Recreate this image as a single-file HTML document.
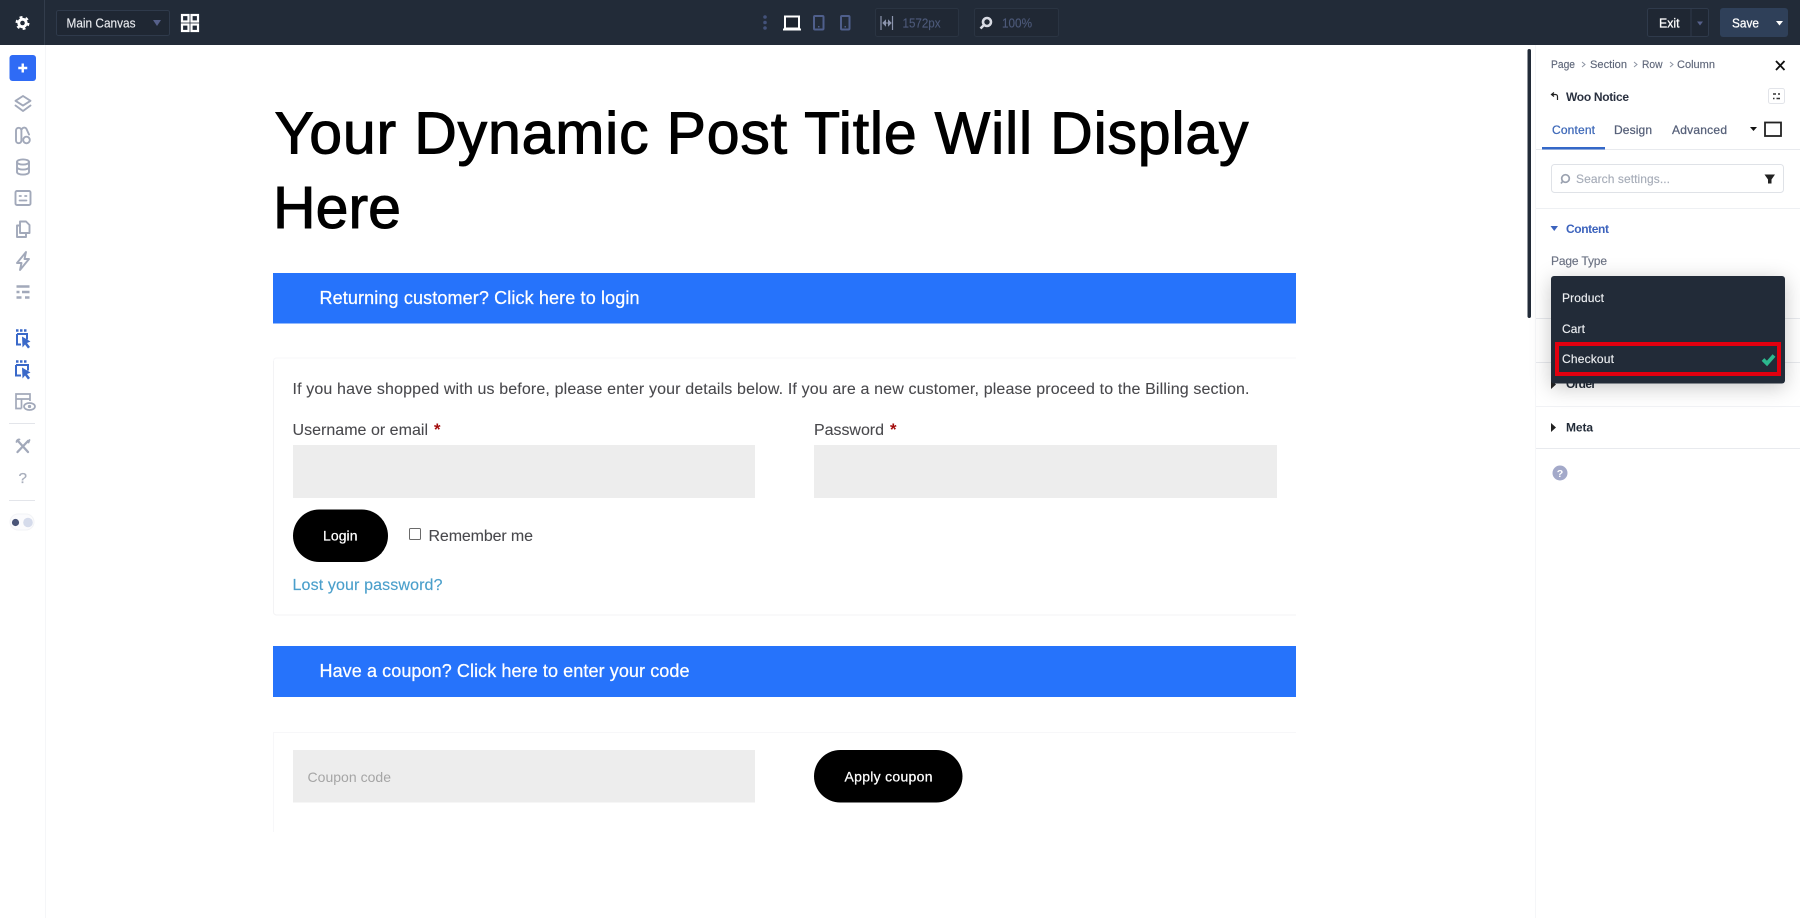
<!DOCTYPE html>
<html lang="en">
<head>
<meta charset="utf-8">
<title>Woo Notice – Main Canvas</title>
<style>
html,body{margin:0;padding:0;background:#fff;width:1800px;height:918px;overflow:hidden}
svg{display:block;position:absolute;left:0;top:0}
text{font-family:"Liberation Sans",sans-serif;white-space:pre}
.m{stroke-width:.25px}
.b{stroke-width:.14px}
.t{stroke-width:.08px}
</style>
</head>
<body>
<svg xmlns="http://www.w3.org/2000/svg" width="1800" height="918" viewBox="0 0 1800 918">
<rect width="1800" height="918" fill="#fff"/>

<!-- top bar -->
<rect width="1800" height="45" fill="#222b38"/>
<line x1="44.500" y1="0" x2="44.500" y2="45" fill="none" stroke="#333d4c"/>
<g transform="translate(22.500,23)">
  <circle r="5.200" fill="#fff"/>
  <circle r="6" fill="none" stroke="#fff" stroke-width="2" stroke-dasharray="2.900 3.380"/>
  <circle r="2.300" fill="#222b38"/>
</g>
<rect x="56.500" y="10.500" width="113" height="25" rx="2" fill="#1f2733" stroke="#2f3a4b"/>
<text x="66.500" y="27.500" font-size="13" fill="#e9ebef" stroke="#e9ebef" class="b" textLength="69" lengthAdjust="spacingAndGlyphs">Main Canvas</text>
<path d="M153 20h8l-4 6z" fill="#56608a"/>
<g fill="none" stroke="#fff" stroke-width="2.200">
  <rect x="182" y="15" width="6.500" height="6.500"/><rect x="191.500" y="15" width="6.500" height="6.500"/>
  <rect x="182" y="24.500" width="6.500" height="6.500"/><rect x="191.500" y="24.500" width="6.500" height="6.500"/>
</g>
<g fill="#43527a"><circle cx="765" cy="17" r="1.800"/><circle cx="765" cy="22.500" r="1.800"/><circle cx="765" cy="28" r="1.800"/></g>
<rect x="785" y="16.500" width="14" height="12" fill="#1c232e" stroke="#fff" stroke-width="2"/>
<rect x="783" y="28.500" width="18" height="2" fill="#fff"/>
<rect x="814" y="16" width="9.500" height="13.500" rx="1" fill="none" stroke="#4f5f8c" stroke-width="2"/>
<rect x="841" y="16" width="8.500" height="13.500" rx="1" fill="none" stroke="#4f5f8c" stroke-width="2"/>
<rect x="818" y="26" width="1.500" height="1.500" fill="#4f5f8c"/><rect x="844.500" y="26" width="1.500" height="1.500" fill="#4f5f8c"/>
<rect x="875.500" y="8.500" width="83" height="28" rx="2" fill="#202834" stroke="#2a3442"/>
<path d="M881 16v14M892.500 16v14" stroke="#8b94ad" stroke-width="1.200" fill="none"/>
<path d="M883 23h8M883 23l2.500-2.500v5zM891 23l-2.500-2.500v5z" stroke="#8b94ad" fill="#8b94ad" stroke-width="1"/>
<text x="902.500" y="27.500" font-size="13" fill="#4d5a7a" stroke="#4d5a7a" class="b" textLength="38" lengthAdjust="spacingAndGlyphs">1572px</text>
<rect x="974.500" y="8.500" width="84" height="28" rx="2" fill="#202834" stroke="#2a3442"/>
<circle cx="987" cy="22" r="4" fill="none" stroke="#d8dbe3" stroke-width="2.600"/>
<path d="M983.500 25.500l-3 3" stroke="#d8dbe3" stroke-width="2.600"/>
<text x="1002" y="27.500" font-size="13" fill="#4d5a7a" stroke="#4d5a7a" class="b" textLength="30" lengthAdjust="spacingAndGlyphs">100%</text>

<rect x="1647.500" y="8.500" width="61" height="28" rx="2" fill="#1f2733" stroke="#2f3a4b"/>
<line x1="1691" y1="9" x2="1691" y2="36" stroke="#2f3a4b"/>
<text x="1659" y="27.500" font-size="13" fill="#fff" stroke="#fff" class="m" textLength="20.500" lengthAdjust="spacingAndGlyphs">Exit</text>
<path d="M1697 21.500h6l-3 4z" fill="#56608a"/>
<rect x="1720" y="8" width="68" height="29" rx="3" fill="#2f4059"/>
<text x="1732" y="27.500" font-size="13" fill="#fff" stroke="#fff" class="m" textLength="27" lengthAdjust="spacingAndGlyphs">Save</text>
<path d="M1776 21h7l-3.500 4.500z" fill="#fff"/>

<!-- left sidebar -->
<line x1="45.500" y1="45" x2="45.500" y2="918" stroke="#f5f6f8"/>
<rect x="9.500" y="55" width="26.500" height="26" rx="3" fill="#2f6bf5"/>
<path d="M22.750 63.500v9M18.250 68h9" stroke="#fff" stroke-width="2.400"/>
<g fill="none" stroke="#a2a9ba" stroke-width="1.900" stroke-linejoin="round" stroke-linecap="round">
  <g transform="translate(23,104)"><path d="M0-8l7.500 4.800L0 1.600l-7.500-4.800z"/><path d="M-7.500 1.500L0 7l7.500-5.500"/></g>
  <g transform="translate(23,135.500)"><path d="M-7-5a2.700 2.700 0 0 1 5.400 0V5a2.700 2.700 0 0 1-5.400 0z"/><path d="M-1-6.500a2.500 2.500 0 0 1 4.500 0L6-1"/><circle cx="3.500" cy="4.500" r="3.300"/></g>
  <g transform="translate(23,167)"><ellipse cy="-5" rx="6" ry="2.600"/><path d="M-6-5V5c0 1.500 2.700 2.600 6 2.600S6 6.500 6 5V-5M-6 0c0 1.500 2.700 2.600 6 2.600S6 1.500 6 0"/></g>
  <g transform="translate(23,198)"><rect x="-7.500" y="-7" width="15" height="14" rx="1.500"/><path d="M-3.500-2h1.500M2-2h1.500M-3.500 2.500h7" stroke-width="1.700"/></g>
  <g transform="translate(23,229)"><path d="M-3-7.500H3l3.500 3.500V4H-3z"/><path d="M-3-3.500h-3V8H3V4"/></g>
  <g transform="translate(23,261)"><path d="M3-9L-6 2h4.500L-3 9 6-2H1.500z"/></g>
  <g transform="translate(23,292)" stroke-linecap="butt" stroke-width="2.500"><path d="M-6.500-5.500h13M-6.500 0h3M-1 0H6.500M-6.500 5.500h5M2 5.500h4.500"/></g>
</g>
<g fill="none" stroke="#3a69c9" stroke-width="2">
  <g transform="translate(22,338)">
    <path d="M-5-4H5V1.500M-5-4V6.500H-1"/><path d="M-6-7.500h2.500M-2-7.500h2.500M2-7.500h2.500" stroke-width="2.400"/>
    <path d="M0-1.500L8.500 3.500 5 5l3 4-2 1.500-3-4-2.500 3z" fill="#3a69c9" stroke="none"/>
  </g>
  <g transform="translate(22,369)">
    <path d="M-6-4H6V1.500M-6-4V6.500H-1"/><path d="M-6-7.500h2.500M-2-7.500h2.500M2-7.500h2.500" stroke-width="2.400"/>
    <path d="M0-1.500L8.500 3.500 5 5l3 4-2 1.500-3-4-2.500 3z" fill="#3a69c9" stroke="none"/>
  </g>
</g>
<g fill="none" stroke="#a2a9ba" stroke-width="1.700">
  <g transform="translate(23,401)"><path d="M-1.500 7.500H-7V-7H7V0M-7-2H7M-1.500-2V7.500"/><ellipse cx="6.500" cy="5.500" rx="5.500" ry="3.500"/><circle cx="6.500" cy="5.500" r=".8"/></g>
</g>
<line x1="9" y1="423.500" x2="35" y2="423.500" stroke="#e3e5ea"/>
<g fill="none" stroke="#a2a9ba" stroke-width="2.300" stroke-linecap="round">
  <path d="M18 441l10 11M28 441L17.500 452"/>
  <path d="M16.500 442a2.500 2.500 0 0 1 3-2.500M29.500 440l-1 2.500" stroke-width="1.800"/>
</g>
<text x="18.500" y="483" font-size="15" fill="#a8aebc" textLength="8.500" lengthAdjust="spacingAndGlyphs" stroke="#a8aebc" class="m">?</text>
<line x1="9" y1="500.500" x2="35" y2="500.500" stroke="#e3e5ea"/>
<rect x="10" y="514" width="24" height="16" rx="8" fill="#fbfbfd" stroke="#f2f3f6"/>
<circle cx="15.500" cy="522.500" r="3.600" fill="#4a5578"/><circle cx="28" cy="522.500" r="4.800" fill="#d5dbeb"/>

<!-- title -->
<g fill="#000" stroke="#000" stroke-width="1">
<text x="274.500" y="153.500" font-size="59" textLength="974" lengthAdjust="spacing">Your Dynamic Post Title Will Display</text>
<text x="273" y="228" font-size="59" textLength="128" lengthAdjust="spacing">Here</text>
</g>

<!-- banner 1 -->
<rect x="273" y="273" width="1023" height="50.500" fill="#2673fb"/>
<text x="319.500" y="304" font-size="18" fill="#fff" stroke="#fff" class="m" textLength="320" lengthAdjust="spacing">Returning customer? Click here to login</text>

<!-- login card -->
<path d="M273.500 361V612a3 3 0 0 0 3 3H1296" fill="none" stroke="#f3f3f5"/>
<path d="M273.500 361a3 3 0 0 1 3-3H1296" fill="none" stroke="#f7f7f9"/>
<g fill="#48484c" stroke="#48484c" class="t">
<text x="292.500" y="394" font-size="16" textLength="957" lengthAdjust="spacing">If you have shopped with us before, please enter your details below. If you are a new customer, please proceed to the Billing section.</text>
<text x="292.500" y="435" font-size="16" textLength="135.500" lengthAdjust="spacing">Username or email</text>
<text x="814" y="435" font-size="16" textLength="70" lengthAdjust="spacing">Password</text>
<text x="428.500" y="541" font-size="16" textLength="104.500" lengthAdjust="spacing">Remember me</text>
</g>
<text x="434" y="435" font-size="16.500" fill="#a30b0b" font-weight="700" textLength="6.500" lengthAdjust="spacingAndGlyphs">*</text>
<text x="890" y="435" font-size="16.500" fill="#a30b0b" font-weight="700" textLength="6.500" lengthAdjust="spacingAndGlyphs">*</text>
<rect x="293" y="445" width="462" height="53" fill="#ededed"/>
<rect x="814" y="445" width="463" height="53" fill="#ededed"/>
<rect x="293" y="509.500" width="95" height="52.500" rx="26.250" fill="#000"/>
<text x="323" y="540.500" font-size="14" fill="#fff" stroke="#fff" class="m" textLength="34.500" lengthAdjust="spacing">Login</text>
<rect x="409.500" y="528.500" width="11" height="11" rx="1" fill="#fff" stroke="#6a6a6a"/>
<text x="292.500" y="590" font-size="16" fill="#4a9fcb" stroke="#4a9fcb" class="b" textLength="150" lengthAdjust="spacing">Lost your password?</text>

<!-- banner 2 -->
<rect x="273" y="646" width="1023" height="51" fill="#2673fb"/>
<text x="319.500" y="677" font-size="18" fill="#fff" stroke="#fff" class="m" textLength="370" lengthAdjust="spacing">Have a coupon? Click here to enter your code</text>

<!-- coupon card -->
<path d="M273.500 832V732.500H1296" fill="none" stroke="#f7f7f9"/>
<rect x="293" y="750" width="462" height="52.500" fill="#ededed"/>
<text x="307.500" y="782" font-size="14" fill="#a5a5a5" textLength="83.500" lengthAdjust="spacing">Coupon code</text>
<rect x="814" y="750" width="148.500" height="52.500" rx="26.250" fill="#000"/>
<text x="844.500" y="781.500" font-size="14" fill="#fff" stroke="#fff" class="m" textLength="88" lengthAdjust="spacing">Apply coupon</text>

<!-- right panel -->
<line x1="1535.500" y1="45" x2="1535.500" y2="918" stroke="#f5f6f8"/>
<rect x="1527.500" y="49" width="3.500" height="269" rx="1.700" fill="#222b38"/>
<g font-size="11" fill="#5e6679" stroke="#5e6679" class="b">
  <text x="1551" y="68" textLength="24" lengthAdjust="spacingAndGlyphs">Page</text>
  <text x="1590" y="68" textLength="37" lengthAdjust="spacingAndGlyphs">Section</text>
  <text x="1642" y="68" textLength="20.500" lengthAdjust="spacingAndGlyphs">Row</text>
  <text x="1677" y="68" textLength="38" lengthAdjust="spacingAndGlyphs">Column</text>
</g>
<path d="M1582 62l3 2.500-3 2.500M1634 62l3 2.500-3 2.500M1670 62l3 2.500-3 2.500" fill="none" stroke="#8d94a3"/>
<path d="M1776 61l8.500 9M1784.500 61l-8.500 9" stroke="#111" stroke-width="1.800"/>
<path d="M1557.500 100v-3.500a2 2 0 0 0-2-2H1552M1554 92.500l-2.500 2 2.500 2" fill="none" stroke="#222" stroke-width="1.200"/>
<text x="1566" y="101" font-size="12" font-weight="700" fill="#2a3140" textLength="63" lengthAdjust="spacing">Woo Notice</text>
<rect x="1768.500" y="88.500" width="16" height="15" rx="2" fill="#fff" stroke="#e2e4e9"/>
<path d="M1773 94h3M1778 94h2M1773 98.500h1.500M1776.500 98.500h3.500" stroke="#333" stroke-width="1.500"/>
<text x="1552" y="134" font-size="12" fill="#3d68b8" stroke="#3d68b8" class="m" textLength="43" lengthAdjust="spacing">Content</text>
<text x="1614" y="134" font-size="12" fill="#566079" stroke="#566079" class="m" textLength="38" lengthAdjust="spacing">Design</text>
<text x="1672" y="134" font-size="12" fill="#566079" stroke="#566079" class="m" textLength="55" lengthAdjust="spacing">Advanced</text>
<path d="M1750 127h7l-3.500 4z" fill="#111"/>
<rect x="1765" y="122.500" width="16" height="13.500" fill="#fff" stroke="#222" stroke-width="1.800"/>
<line x1="1536" y1="149.500" x2="1800" y2="149.500" stroke="#e8eaee"/>
<rect x="1542" y="147" width="63" height="2.500" fill="#3468c8"/>
<rect x="1551.500" y="164.500" width="232" height="28" rx="3" fill="#fff" stroke="#dfe2e7"/>
<circle cx="1565.500" cy="178.500" r="3.800" fill="none" stroke="#9ba2b0" stroke-width="1.700"/>
<path d="M1562.500 181.500l-1.500 2" stroke="#9ba2b0" stroke-width="1.700"/>
<text x="1576" y="183" font-size="12" fill="#a6acb8" stroke="#a6acb8" class="b" textLength="94" lengthAdjust="spacing">Search settings...</text>
<path d="M1764.500 174.500h10.500l-3.500 5v4h-3.500v-4z" fill="#222"/>
<line x1="1536" y1="208.500" x2="1800" y2="208.500" stroke="#eef0f3"/>
<path d="M1550.500 226h7.500l-3.750 5z" fill="#3c63bd"/>
<text x="1566" y="233" font-size="12" font-weight="700" fill="#3c63bd" textLength="43" lengthAdjust="spacing">Content</text>
<text x="1551" y="265" font-size="12" fill="#6b7283" stroke="#6b7283" class="b" textLength="56" lengthAdjust="spacing">Page Type</text>
<line x1="1536" y1="318.500" x2="1800" y2="318.500" stroke="#e8eaee"/>
<line x1="1536" y1="362.500" x2="1800" y2="362.500" stroke="#e8eaee"/>
<path d="M1551 380l5 4.500-5 4.500z" fill="#222"/>
<text x="1566" y="388" font-size="12" font-weight="700" fill="#222b38" textLength="30" lengthAdjust="spacing">Order</text>
<line x1="1536" y1="406.500" x2="1800" y2="406.500" stroke="#f1f2f5"/>
<path d="M1551 423l5 4.500-5 4.500z" fill="#222"/>
<text x="1566" y="431.500" font-size="12" font-weight="700" fill="#222b38" textLength="27" lengthAdjust="spacing">Meta</text>
<line x1="1536" y1="448.500" x2="1800" y2="448.500" stroke="#e8eaee"/>
<circle cx="1560" cy="473" r="7.500" fill="#a3a9c9"/>
<text x="1556.800" y="477" font-size="10.500" font-weight="700" fill="#fff" textLength="6.500" lengthAdjust="spacingAndGlyphs">?</text>

<!-- dropdown -->
<rect x="1551" y="276" width="234" height="107.500" rx="3" fill="#222b38" style="filter:drop-shadow(0 4px 10px rgba(0,0,0,.22))"/>
<g font-size="12" fill="#eef0f3" stroke="#eef0f3" class="b">
<text x="1562" y="302" textLength="42" lengthAdjust="spacing">Product</text>
<text x="1562" y="333" textLength="23" lengthAdjust="spacing">Cart</text>
<text x="1562" y="363" textLength="52" lengthAdjust="spacing">Checkout</text>
</g>
<path d="M1763 359.500l4 4 7-8" fill="none" stroke="#2cb88e" stroke-width="3.800"/>
<rect x="1557" y="344" width="222" height="30" fill="none" stroke="#e2000f" stroke-width="4"/>
</svg>
</body>
</html>
